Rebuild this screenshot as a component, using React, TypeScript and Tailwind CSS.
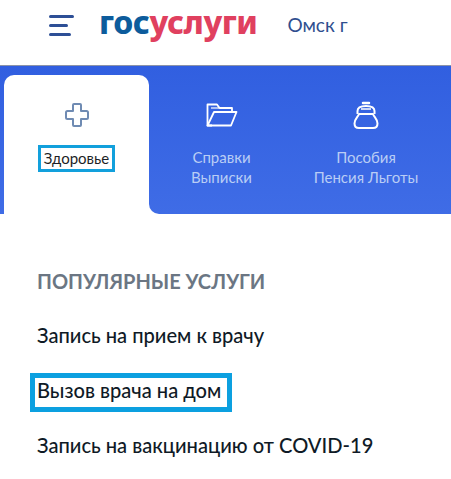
const font = "font-['Lato','Noto_Sans',sans-serif]"

function PlusIcon() {
  return (
    <svg width="26" height="26" viewBox="0 0 26 26" fill="none" stroke="#6f8bb3" strokeWidth="2" strokeLinejoin="round">
      <path d="M10 2h6a1 1 0 0 1 1 1v6h5.500a1.500 1.500 0 0 1 1.500 1.500v5a1.500 1.500 0 0 1-1.500 1.500H17v6a1 1 0 0 1-1 1h-6a1 1 0 0 1-1-1v-6H3.500A1.500 1.500 0 0 1 2 15.500v-5A1.500 1.500 0 0 1 3.500 9H9V3a1 1 0 0 1 1-1z" />
    </svg>
  )
}

function FolderIcon() {
  return (
    <svg width="32" height="24" viewBox="0 0 32 24" fill="none" stroke="#fff" strokeWidth="1.800" strokeLinejoin="round">
      <path d="M6 22.500H1.500V1.500h9.500l2.500 3.500H26v4" />
      <path d="M1.500 22.500L8 9h22.500L25 22.500z" />
      <path d="M5 5h8" strokeWidth="1.200" />
    </svg>
  )
}

function PurseIcon() {
  return (
    <svg width="26" height="28" viewBox="0 0 26 28" fill="none" stroke="#fff" strokeWidth="2" strokeLinejoin="round">
      <path d="M10 2h6" strokeWidth="2.500" strokeLinecap="round" />
      <path d="M4.500 13V10C4.500 6.500 8.500 5 13 5s8.500 1.500 8.500 5v3" />
      <path d="M8 8h10" strokeWidth="1.500" />
      <path d="M6 13h14C21 16 24.500 18 24.500 22.500c0 3-2 4.500-4.500 4.500H6c-2.500 0-4.500-1.500-4.500-4.500C1.500 18 5 16 6 13z" />
    </svg>
  )
}

function Tab({ icon, lines }: { icon: React.ReactNode; lines: string[] }) {
  return (
    <div className="flex flex-col items-center pt-[27px]">
      <div className="flex h-[26px] items-center">{icon}</div>
      <div className="mt-[19px] text-center text-[15px] leading-[20px] text-[#b9cdf5]">
        {lines.map((l) => (
          <div key={l}>{l}</div>
        ))}
      </div>
    </div>
  )
}

export default function App() {
  return (
    <div className={`h-[479px] w-[451px] overflow-hidden bg-white ${font}`}>
      <header className="flex h-[65px] items-center pb-[14px]">
        <div className="ml-[49px] flex w-[26px] flex-col gap-[6.500px]">
          <span className="h-[2.500px] w-[25px] rounded-full bg-[#2d4f96]" />
          <span className="h-[2.500px] w-[19px] rounded-full bg-[#2d4f96]" />
          <span className="h-[2.500px] w-[22px] rounded-full bg-[#2d4f96]" />
        </div>
        <div className="ml-[24px] pb-[7px] font-['Noto_Sans',sans-serif] text-[32px] leading-[40px] font-extrabold tracking-[-0.4px]">
          <span className="text-[#0d5c9c]">гос</span>
          <span className="text-[#e0405f]">услуги</span>
        </div>
        <span className="ml-[30px] text-[19px] text-[#2f4f8f]">Омск г</span>
      </header>

      <nav className="flex h-[149px] border-t border-t-[#8b93a8]">
        <div className="w-[149px] bg-gradient-to-b from-[#315fe0] to-[#3f6ce6] pt-[9px] pl-[4px]">
          <div className="flex h-full flex-col items-center rounded-t-[10px] bg-white pt-[27px]">
            <PlusIcon />
            <div className="mt-[17px] border-[3px] border-[#12a0dc] px-[3px] text-[15px] leading-[21px] text-[#1c1f26]">
              Здоровье
            </div>
          </div>
        </div>
        <div className="flex flex-1 rounded-bl-[10px] bg-gradient-to-b from-[#315fe0] to-[#3f6ce6] pt-[9px] pr-[13px]">
          <div className="w-[145px]">
            <Tab icon={<FolderIcon />} lines={["Справки", "Выписки"]} />
          </div>
          <div className="flex-1">
            <Tab icon={<PurseIcon />} lines={["Пособия", "Пенсия Льготы"]} />
          </div>
        </div>
      </nav>

      <main className="px-[37px] pt-[55px]">
        <h2 className="text-[20px] leading-[24px] font-bold text-[#6b7683]">ПОПУЛЯРНЫЕ УСЛУГИ</h2>
        <div className="mt-[30px] text-[20.100px] leading-[24px] font-medium text-[#0f1a26]">Запись на прием к врачу</div>
        <div className="-ml-[7px] mt-[26px] w-fit border-[5px] border-[#0ca0e0] pr-[6px] pl-[2px] pb-[5px] text-[20.100px] leading-[24px] font-medium text-[#0f1a26]">
          Вызов врача на дом
        </div>
        <div className="mt-[21px] text-[20.100px] leading-[24px] font-medium text-[#0f1a26]">Запись на вакцинацию от COVID-19</div>
      </main>
    </div>
  )
}
